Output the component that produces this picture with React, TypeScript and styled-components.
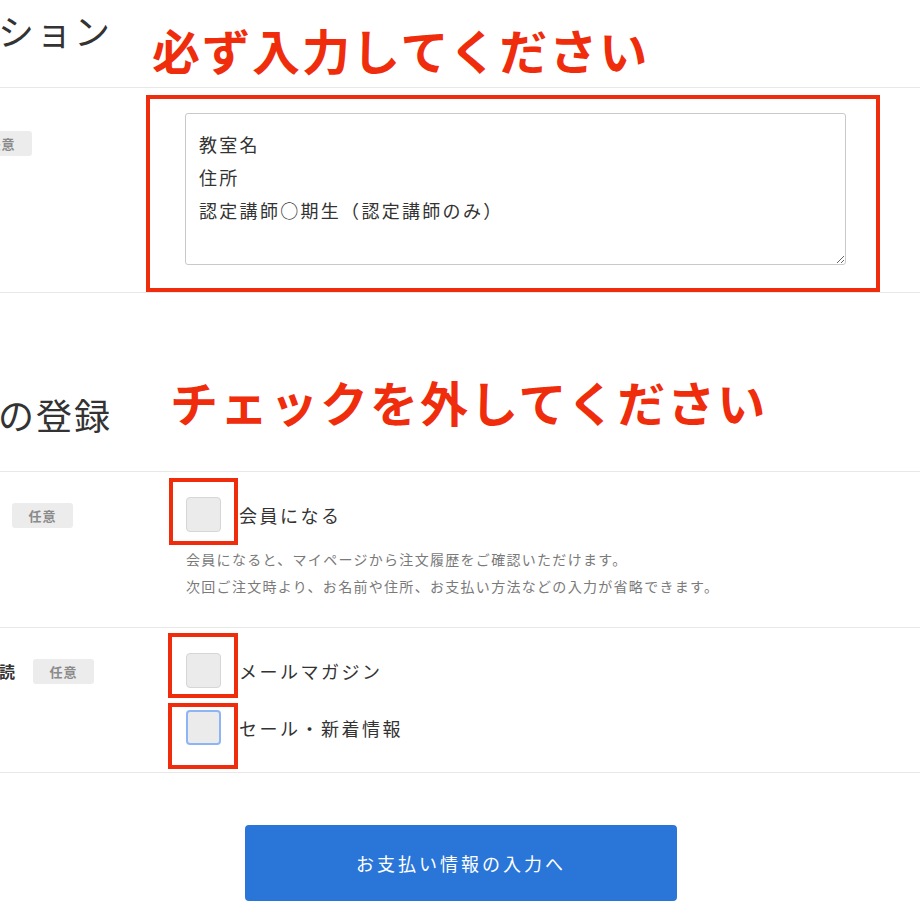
import styled, { createGlobalStyle } from 'styled-components';

const GlobalStyle = createGlobalStyle`
  html, body {
    margin: 0;
    padding: 0;
    background: #ffffff;
  }

  body {
    font-family: 'Noto Sans CJK JP', 'Noto Sans', sans-serif;
    color: #333333;
  }
`;

const Page = styled.main`
  width: 920px;
  height: 920px;
  overflow: hidden;
  background: #ffffff;
`;

const SectionHeader = styled.header<{ $height: number }>`
  display: flex;
  align-items: flex-end;
  height: ${({ $height }) => $height}px;
  border-bottom: 1px solid #e8e8e8;
`;

const SectionTitle = styled.h2<{ $lift: number }>`
  margin: 0 0 ${({ $lift }) => $lift}px -2px;
  flex-shrink: 0;

  font-size: 36px;
  font-weight: 400;
  line-height: 43px;
  letter-spacing: 2px;
  color: #333333;
  white-space: nowrap;
`;

const Note = styled.p<{ $lift: number; $x: number }>`
  margin: 0 0 ${({ $lift }) => $lift}px ${({ $x }) => $x}px;

  font-size: 48px;
  font-weight: 700;
  line-height: 58px;
  letter-spacing: 2px;
  color: #ef2d0c;
  white-space: nowrap;
`;

const FieldRow = styled.section`
  display: grid;
  grid-template-columns: 185px 1fr;
  align-items: start;

  padding: 25px 0 27px;
  border-bottom: 1px solid #e8e8e8;
`;

const LabelCell = styled.div<{ $offset: number; $top: number }>`
  display: flex;
  align-items: center;
  gap: 18px;

  margin-left: ${({ $offset }) => $offset}px;
  padding-top: ${({ $top }) => $top}px;
  white-space: nowrap;
`;

const LabelText = styled.span`
  font-size: 16px;
  font-weight: 700;
  line-height: 25px;
  color: #333333;
`;

const Badge = styled.span`
  display: inline-flex;
  align-items: center;
  justify-content: center;

  width: 61px;
  height: 25px;

  background: #ececec;
  border-radius: 3px;

  font-size: 13px;
  font-weight: 700;
  letter-spacing: 1px;
  color: #8a8a8a;
`;

const FieldBody = styled.div`
  display: flex;
  flex-direction: column;
  align-items: flex-start;
`;

const Marked = styled.div`
  position: relative;
  display: flex;
`;

const Frame = styled.span<{ $inset: string }>`
  position: absolute;
  inset: ${({ $inset }) => $inset};

  border: 4px solid #ef2d0c;
  pointer-events: none;
`;

const TextArea = styled.textarea`
  box-sizing: border-box;
  width: 661px;
  height: 152px;
  padding: 14px 13px;

  border: 1px solid #c9c9c9;
  border-radius: 3px;
  outline: none;
  resize: vertical;

  font-family: inherit;
  font-size: 18px;
  line-height: 33px;
  letter-spacing: 2.3px;
  color: #333333;
`;

const OptionList = styled.div`
  display: flex;
  flex-direction: column;
  gap: 22px;
`;

const Option = styled.label`
  display: flex;
  align-items: center;
  gap: 18px;

  font-size: 18px;
  letter-spacing: 2.5px;
  color: #333333;
  cursor: pointer;
`;

const CheckBox = styled.input<{ $focused?: boolean }>`
  appearance: none;
  box-sizing: border-box;
  width: 35px;
  height: 35px;
  margin: 0 0 0 1px;

  background: #ebebeb;
  border: ${({ $focused }) => ($focused ? '2px solid #8db5f6' : '1px solid #d6d6d6')};
  border-radius: 4px;
  outline: none;
`;

const Description = styled.p`
  margin: 14px 0 0 1px;

  font-size: 14px;
  line-height: 27px;
  letter-spacing: 1.3px;
  color: #7a7a7a;
`;

const Actions = styled.div`
  display: flex;
  justify-content: center;
  padding: 52px 0 0 2px;
`;

const SubmitButton = styled.button`
  width: 432px;
  height: 76px;

  background: #2a76d8;
  border: none;
  border-radius: 4px;

  font-family: inherit;
  font-size: 18px;
  letter-spacing: 3px;
  color: #ffffff;
  cursor: pointer;
`;

const App = () => (
  <Page>
    <GlobalStyle />

    <SectionHeader $height={87}>
      <SectionTitle $lift={35}>ション</SectionTitle>
      <Note $lift={9} $x={40}>必ず入力してください</Note>
    </SectionHeader>

    <FieldRow>
      <LabelCell $offset={-29} $top={18}>
        <Badge>任意</Badge>
      </LabelCell>
      <FieldBody>
        <Marked>
          <TextArea
            defaultValue={'教室名\n住所\n認定講師○期生（認定講師のみ）'}
          />
          <Frame $inset="-18px -34px -27px -39px" />
        </Marked>
      </FieldBody>
    </FieldRow>

    <SectionHeader $height={178}>
      <SectionTitle $lift={35}>の登録</SectionTitle>
      <Note $lift={41} $x={58}>チェックを外してください</Note>
    </SectionHeader>

    <FieldRow>
      <LabelCell $offset={12} $top={6}>
        <Badge>任意</Badge>
      </LabelCell>
      <FieldBody>
        <Option>
          <Marked>
            <CheckBox type="checkbox" />
            <Frame $inset="-19px -17px -13px -16px" />
          </Marked>
          会員になる
        </Option>
        <Description>
          会員になると、マイページから注文履歴をご確認いただけます。
          <br />
          次回ご注文時より、お名前や住所、お支払い方法などの入力が省略できます。
        </Description>
      </FieldBody>
    </FieldRow>

    <FieldRow>
      <LabelCell $offset={-17} $top={6}>
        <LabelText>購読</LabelText>
        <Badge>任意</Badge>
      </LabelCell>
      <FieldBody>
        <OptionList>
          <Option>
            <Marked>
              <CheckBox type="checkbox" />
              <Frame $inset="-20px -17px -10px -17px" />
            </Marked>
            メールマガジン
          </Option>
          <Option>
            <Marked>
              <CheckBox type="checkbox" $focused />
              <Frame $inset="-7px -17px -24px -17px" />
            </Marked>
            セール・新着情報
          </Option>
        </OptionList>
      </FieldBody>
    </FieldRow>

    <Actions>
      <SubmitButton type="button">お支払い情報の入力へ</SubmitButton>
    </Actions>
  </Page>
);

export default App;
